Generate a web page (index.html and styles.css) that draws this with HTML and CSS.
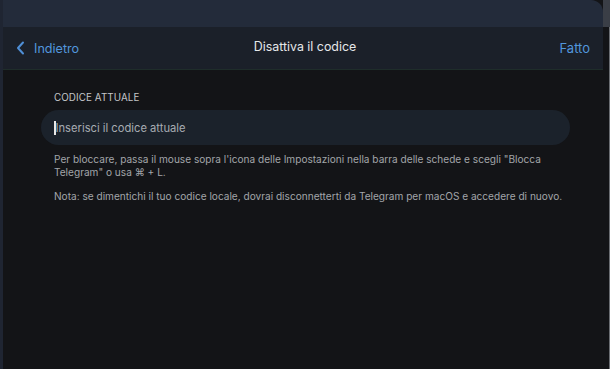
FILE: index.html
```html
<!DOCTYPE html>
<html lang="it">
<head>
<meta charset="utf-8">
<link rel="stylesheet" href="styles.css">
</head>
<body>
<div class="screen">
  <div class="edge-left"></div>
  <div class="window">
    <div class="topbar"></div>
    <header class="navbar">
      <a class="back">
        <svg class="chev" width="9" height="14" viewBox="0 0 9 14"><path d="M7 1.5 L2 7 L7 12.5" fill="none" stroke="#4f8fd6" stroke-width="2" stroke-linecap="round" stroke-linejoin="round"/></svg>
        <span>Indietro</span>
      </a>
      <div class="title">Disattiva il codice</div>
      <a class="done">Fatto</a>
    </header>
    <main class="content">
      <div class="label">CODICE ATTUALE</div>
      <div class="field"><span class="caret"></span><span class="placeholder">Inserisci il codice attuale</span></div>
      <p class="note">Per bloccare, passa il mouse sopra l'icona delle Impostazioni nella barra delle schede e scegli "Blocca Telegram" o usa ⌘ + L.</p>
      <p class="note">Nota: se dimentichi il tuo codice locale, dovrai disconnetterti da Telegram per macOS e accedere di nuovo.</p>
    </main>
  </div>
  <div class="edge-right"></div>
</div>
</body>
</html>
```
FILE: styles.css
```css
html, body {
  margin: 0;
  padding: 0;
  background: #3a3e46;
  font-family: "Inter", "Liberation Sans", sans-serif;
}
.screen {
  display: flex;
  width: 610px;
  height: 369px;
  overflow: hidden;
}
.edge-left {
  width: 3px;
  background: #1f2532;
}
.window {
  width: 600px;
  display: flex;
  flex-direction: column;
  background: #131417;
}
.edge-right {
  width: 7px;
  background: #131417;
  border-right: 1px solid #6a6d72;
  box-sizing: border-box;
  margin-top: 27px;
}
.topbar {
  height: 27px;
  background: #232b3a;
  border-top-right-radius: 12px;
}
.navbar {
  height: 42px;
  background: #1b2029;
  border-bottom: 1px solid #1f2d2a;
  display: grid;
  grid-template-columns: 1fr auto 1fr;
  align-items: center;
  padding: 0 13px 0 13px;
}
.back {
  display: flex;
  align-items: center;
  gap: 9px;
  color: #5296dc;
  font-size: 12.6px;
}
.chev { margin-bottom: 1px; }
.title {
  text-align: center;
  color: #e6e8ea;
  font-size: 12.4px;
  margin-top: -3px;
  margin-left: 4px;
}
.done {
  justify-self: end;
  color: #5296dc;
  font-size: 13px;
}
.content {
  padding: 22px 0 0 38px;
}
.label {
  color: #c4c6c9;
  font-size: 9.8px;
  padding-left: 13px;
  letter-spacing: 0.1px;
}
.field {
  margin-top: 7px;
  width: 529px;
  height: 35px;
  border-radius: 18px;
  background: #1b222b;
  display: flex;
  align-items: center;
  padding-left: 13px;
  box-sizing: border-box;
}
.caret {
  width: 1.5px;
  height: 14px;
  background: #e8e8e8;
}
.placeholder {
  color: #a7acb2;
  font-size: 11.2px;
  margin-top: 1px;
}
.note {
  margin: 0;
  padding-left: 13px;
  width: 515px;
  color: #a2a5a9;
  font-size: 10.1px;
  line-height: 13px;
}
.field + .note { margin-top: 8px; }
.note + .note { margin-top: 11px; }
```
